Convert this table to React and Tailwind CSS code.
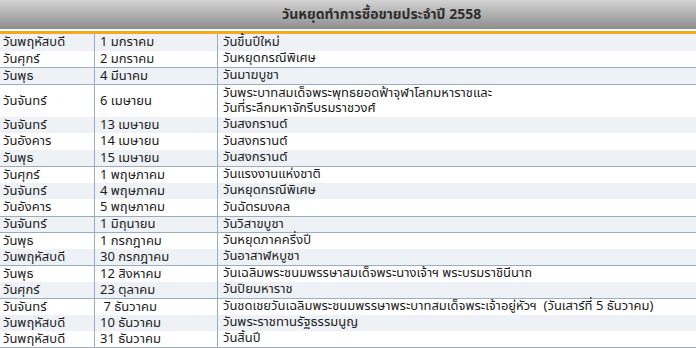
const rows = [
  { day: "วันพฤหัสบดี", date: "1 มกราคม", name: ["วันขึ้นปีใหม่"] },
  { day: "วันศุกร์", date: "2 มกราคม", name: ["วันหยุดกรณีพิเศษ"] },
  { day: "วันพุธ", date: "4 มีนาคม", name: ["วันมาฆบูชา"], top: true },
  {
    day: "วันจันทร์",
    date: "6 เมษายน",
    name: ["วันพระบาทสมเด็จพระพุทธยอดฟ้าจุฬาโลกมหาราชและ", "วันที่ระลึกมหาจักรีบรมราชวงศ์"],
    top: true,
  },
  { day: "วันจันทร์", date: "13 เมษายน", name: ["วันสงกรานต์"] },
  { day: "วันอังคาร", date: "14 เมษายน", name: ["วันสงกรานต์"] },
  { day: "วันพุธ", date: "15 เมษายน", name: ["วันสงกรานต์"] },
  { day: "วันศุกร์", date: "1 พฤษภาคม", name: ["วันแรงงานแห่งชาติ"], top: true },
  { day: "วันจันทร์", date: "4 พฤษภาคม", name: ["วันหยุดกรณีพิเศษ"] },
  { day: "วันอังคาร", date: "5 พฤษภาคม", name: ["วันฉัตรมงคล"] },
  { day: "วันจันทร์", date: "1 มิถุนายน", name: ["วันวิสาขบูชา"], top: true },
  { day: "วันพุธ", date: "1 กรกฎาคม", name: ["วันหยุดภาคครึ่งปี"], top: true },
  { day: "วันพฤหัสบดี", date: "30 กรกฎาคม", name: ["วันอาสาฬหบูชา"] },
  {
    day: "วันพุธ",
    date: "12 สิงหาคม",
    name: ["วันเฉลิมพระชนมพรรษาสมเด็จพระนางเจ้าฯ พระบรมราชินีนาถ"],
    top: true,
  },
  { day: "วันศุกร์", date: "23 ตุลาคม", name: ["วันปิยมหาราช"] },
  {
    day: "วันจันทร์",
    date: "\u00a07 ธันวาคม",
    name: ["วันชดเชยวันเฉลิมพระชนมพรรษาพระบาทสมเด็จพระเจ้าอยู่หัวฯ\u00a0\u00a0(วันเสาร์ที่ 5 ธันวาคม)"],
    top: true,
  },
  { day: "วันพฤหัสบดี", date: "10 ธันวาคม", name: ["วันพระราชทานรัฐธรรมนูญ"] },
  { day: "วันพฤหัสบดี", date: "31 ธันวาคม", name: ["วันสิ้นปี"], bottom: true },
];

function HolidayRow({ row, index }) {
  const bg = index % 2 === 0 ? "bg-[#eef2f6]" : "bg-white";
  const lines = row.name.length;
  return (
    <div
      className={`flex ${bg} ${row.top ? "border-t border-[#9aaec2]" : ""} ${row.bottom ? "border-b border-[#9aaec2]" : ""} ${lines > 1 ? "h-[33px]" : "h-[16.5px]"} box-border`}
    >
      <div className="w-[95px] shrink-0 pl-[3px] flex items-center border-r border-[#9aaec2] whitespace-nowrap">
        <span>{row.day}</span>
      </div>
      <div className="w-[123px] shrink-0 pl-[5px] flex items-center border-r border-[#9aaec2] whitespace-nowrap">
        <span>{row.date}</span>
      </div>
      <div className="flex-1 pl-[5px] flex flex-col justify-center whitespace-nowrap">
        {row.name.map((n) => (
          <span key={n} className="leading-[15px]">{n}</span>
        ))}
      </div>
    </div>
  );
}

export default function App() {
  return (
    <div
      className="w-[696px] h-[348px] overflow-hidden bg-white text-[13px] leading-[14px] text-[#1c1c1c]"
      style={{ fontFamily: "Tahoma, 'Noto Sans Thai', Loma, Garuda, 'DejaVu Sans', sans-serif" }}
    >
      <div className="h-[29px] bg-gradient-to-b from-[#d4d4d4] to-[#8e8e8e] flex items-center pl-[282px] font-bold text-[14px] text-[#2e2e2e]">
        วันหยุดทำการซื้อขายประจำปี 2558
      </div>
      <div className="h-[2px] bg-white" />
      <div className="h-[3px] bg-[#f7a81b]" />
      {rows.map((row, i) => (
        <HolidayRow key={i} row={row} index={i} />
      ))}
    </div>
  );
}
